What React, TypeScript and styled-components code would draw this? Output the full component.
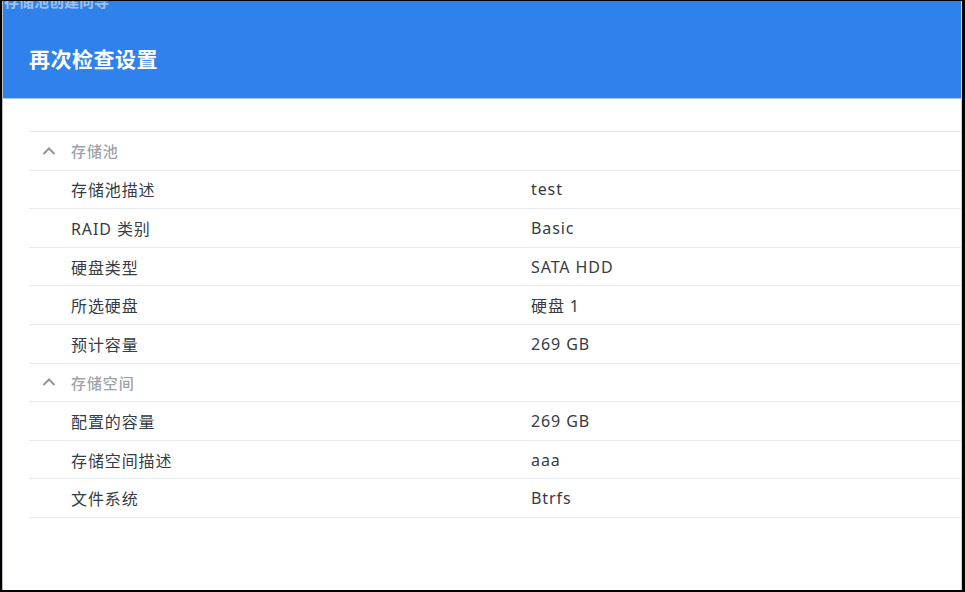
import styled, { createGlobalStyle } from "styled-components";

const GlobalStyle = createGlobalStyle`
  html, body {
    margin: 0;
    padding: 0;
    background: #000;
  }
  body {
    font-family: "Noto Sans", "Noto Sans CJK SC", sans-serif;
  }
`;

const Screen = styled.div`
  width: 965px;
  height: 592px;
  background: #000;
  padding: 1px 3px 2px 2px;
  box-sizing: border-box;
  overflow: hidden;
`;

const Window = styled.div`
  height: 100%;
  background: #fff;
  border-right: 1px solid #c9d3dd;
  border-left: 1px solid #b9bec4;
  box-sizing: border-box;
  display: flex;
  flex-direction: column;
  overflow: hidden;
`;

const Header = styled.header`
  height: 98px;
  flex: 0 0 auto;
  background: #2f81eb;
  border-bottom: 1px solid #a5c7f3;
  box-sizing: border-box;
  display: flex;
  flex-direction: column;
  overflow: hidden;
`;

const Caption = styled.div`
  margin-top: -10px;
  padding-left: 1px;
  font-size: 15px;
  line-height: 20px;
  font-weight: 700;
  color: rgba(255, 255, 255, 0.55);
  font-family: "Noto Sans CJK SC", sans-serif;
`;

const Title = styled.h1`
  margin: 33px 0 0 26px;
  font-size: 21px;
  line-height: 28px;
  font-weight: 700;
  letter-spacing: 0.5px;
  color: #fff;
  font-family: "Noto Sans CJK SC", sans-serif;
`;

const Content = styled.main`
  padding: 32px 0 0 26px;
`;

const Table = styled.div`
  border-top: 1px solid #dfe5ec;
`;

const Row = styled.div`
  height: 38.6px;
  box-sizing: border-box;
  border-bottom: 1px solid #e6ebf1;
  display: flex;
  align-items: center;
  font-size: 16px;
  letter-spacing: 0.9px;
  color: #353c45;
`;

const Toggle = styled.span`
  width: 42px;
  padding-left: 13px;
  box-sizing: border-box;
  display: flex;
  align-items: center;
  color: #8f959c;
`;

const GroupLabel = styled.span`
  color: #9ea3a9;
  font-size: 15px;
  font-weight: 500;
`;

const Label = styled.span`
  width: 460px;
  margin-left: 42px;
  flex: 0 0 auto;
`;

const Value = styled.span``;

const Chevron = () => (
  <svg width="14" height="10" viewBox="0 0 14 10" fill="none">
    <path d="M1.5 8 L7 2.5 L12.5 8" stroke="currentColor" strokeWidth="2" />
  </svg>
);

type Group = { title: string; rows: [string, string][] };

const groups: Group[] = [
  {
    title: "存储池",
    rows: [
      ["存储池描述", "test"],
      ["RAID 类别", "Basic"],
      ["硬盘类型", "SATA HDD"],
      ["所选硬盘", "硬盘 1"],
      ["预计容量", "269 GB"],
    ],
  },
  {
    title: "存储空间",
    rows: [
      ["配置的容量", "269 GB"],
      ["存储空间描述", "aaa"],
      ["文件系统", "Btrfs"],
    ],
  },
];

function App() {
  return (
    <>
      <GlobalStyle />
      <Screen>
        <Window>
          <Header>
            <Caption>存储池创建向导</Caption>
            <Title>再次检查设置</Title>
          </Header>
          <Content>
            <Table>
              {groups.map((g) => (
                <div key={g.title}>
                  <Row>
                    <Toggle>
                      <Chevron />
                    </Toggle>
                    <GroupLabel>{g.title}</GroupLabel>
                  </Row>
                  {g.rows.map(([label, value]) => (
                    <Row key={label}>
                      <Label>{label}</Label>
                      <Value>{value}</Value>
                    </Row>
                  ))}
                </div>
              ))}
            </Table>
          </Content>
        </Window>
      </Screen>
    </>
  );
}

export default App;
